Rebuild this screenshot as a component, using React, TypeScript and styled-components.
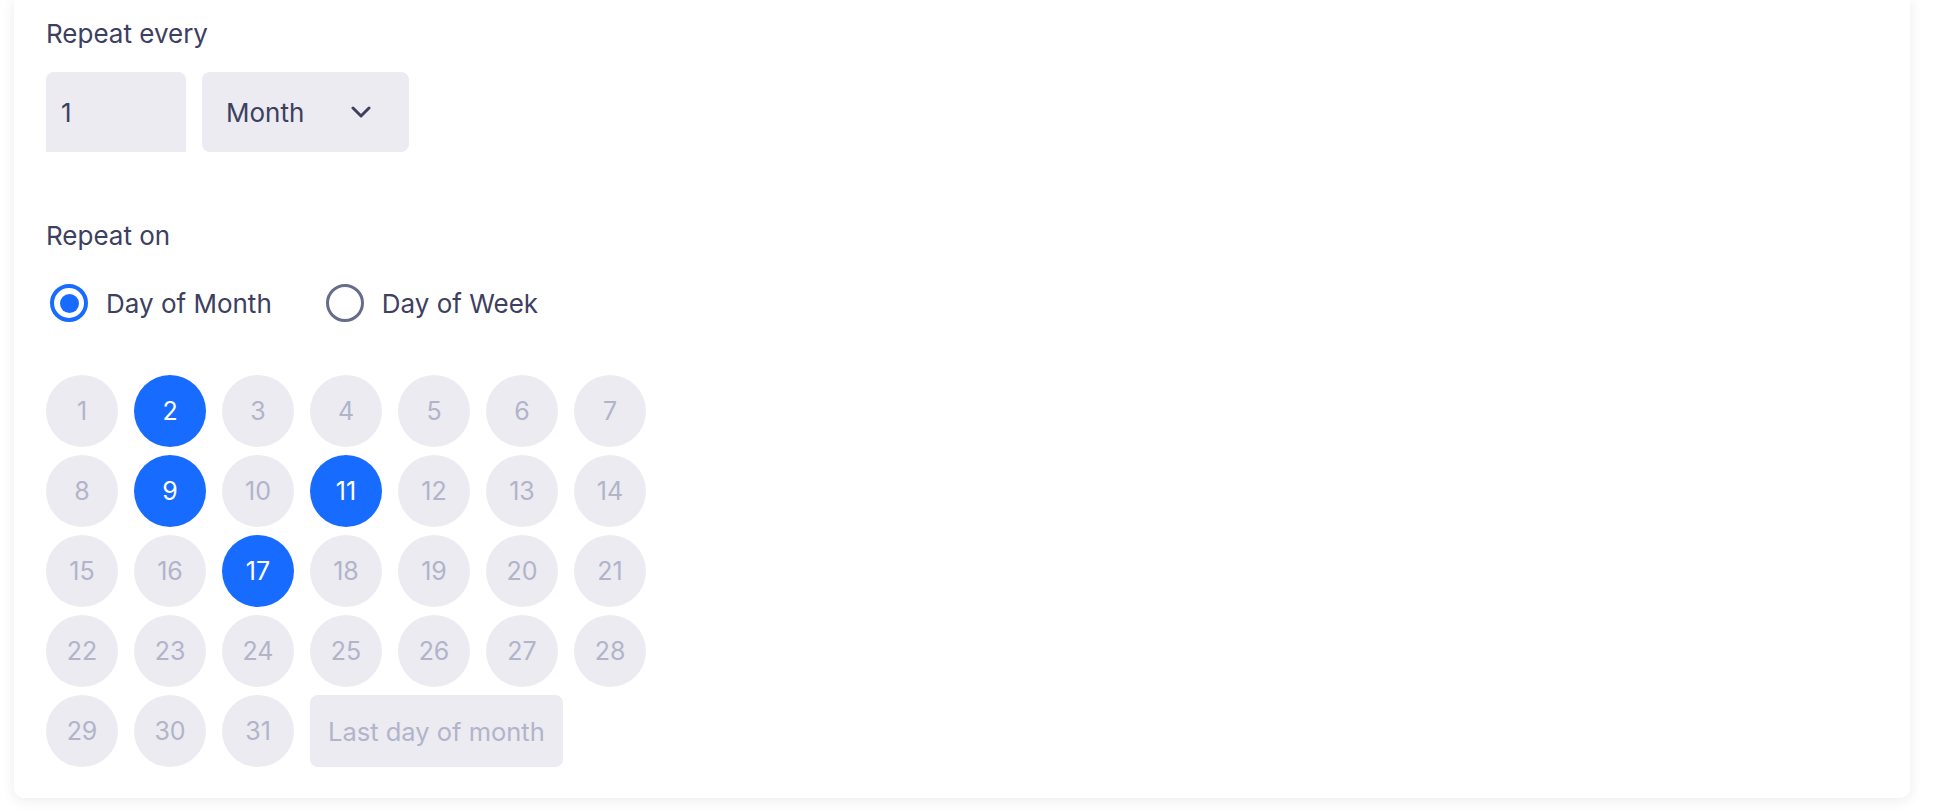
import React, { useState } from 'react';
import styled, { createGlobalStyle } from 'styled-components';

const GlobalStyle = createGlobalStyle`
    html, body {
        margin: 0;
        padding: 0;
        background: #ffffff;
    }
    body {
        font-family: Inter, "Liberation Sans", sans-serif;
        color: #3d405f;
    }
`

const Page = styled.div`
    padding: 0 30px 13px 14px;
`

const Card = styled.div`
    background: #fff;
    border-radius: 0 0 10px 10px;
    box-shadow: 0 2px 14px rgba(30, 34, 70, 0.09);
    padding: 18px 32px 31px 32px;
`

const Label = styled.div`
    font-size: 26px;
    line-height: 32px;
`

const InputRow = styled.div`
    display: flex;
    gap: 16px;
    margin-top: 22px;
`

const NumberBox = styled.div`
    width: 140px;
    height: 80px;
    box-sizing: border-box;
    background: #ebebf1;
    border-radius: 8px 8px 0 0;
    padding-left: 15px;
    display: flex;
    align-items: center;
    font-size: 26px;
`

const Select = styled.div`
    width: 207px;
    height: 80px;
    box-sizing: border-box;
    background: #ebebf1;
    border-radius: 8px;
    padding: 0 38px 0 24px;
    display: flex;
    align-items: center;
    justify-content: space-between;
    font-size: 26px;
`

const Section = styled.div`
    margin-top: 68px;
`

const RadioRow = styled.div`
    display: flex;
    align-items: center;
    gap: 54px;
    margin-top: 32px;
    padding-left: 4px;
`

const RadioOption = styled.label`
    display: flex;
    align-items: center;
    gap: 18px;
    font-size: 26px;
    cursor: pointer;
`

const RadioMark = styled.span<{ $checked: boolean }>`
    width: 38px;
    height: 38px;
    box-sizing: border-box;
    border-radius: 50%;
    border: ${p => p.$checked ? '4px solid #176cff' : '3px solid #686c8c'};
    display: flex;
    align-items: center;
    justify-content: center;
    &::after {
        content: '';
        width: 19px;
        height: 19px;
        border-radius: 50%;
        background: #176cff;
        display: ${p => p.$checked ? 'block' : 'none'};
    }
`

const DayGrid = styled.div`
    display: grid;
    grid-template-columns: repeat(7, 72px);
    column-gap: 16px;
    row-gap: 8px;
    margin-top: 53px;
`

const Day = styled.button<{ $active: boolean }>`
    width: 72px;
    height: 72px;
    border: none;
    border-radius: 50%;
    padding: 0;
    font-family: inherit;
    font-size: 25px;
    background: ${p => p.$active ? '#176cff' : '#ebebf1'};
    color: ${p => p.$active ? '#ffffff' : '#b2b4ca'};
    cursor: pointer;
`

const LastDay = styled.button`
    grid-column: 4 / span 4;
    justify-self: start;
    height: 72px;
    border: none;
    border-radius: 8px;
    padding: 0 18px;
    font-family: inherit;
    font-size: 25.5px;
    background: #ebebf1;
    color: #b2b4ca;
    cursor: pointer;
`

function Chevron() {
    return (
        <svg width="20" height="12" viewBox="0 0 20 12" fill="none">
            <path d="M2 2l8 8 8-8" stroke="#3d405f" strokeWidth="3" strokeLinecap="round" strokeLinejoin="round" />
        </svg>
    )
}

export default function App() {
    const [mode, setMode] = useState<'month' | 'week'>('month')
    const [selected, setSelected] = useState<number[]>([2, 9, 11, 17])
    const days = Array.from({ length: 31 }, (_, i) => i + 1)

    function toggle(d: number) {
        setSelected(s => s.includes(d) ? s.filter(x => x !== d) : [...s, d])
    }

    return (
        <>
            <GlobalStyle />
            <Page>
                <Card>
                    <Label>Repeat every</Label>
                    <InputRow>
                        <NumberBox>1</NumberBox>
                        <Select>
                            Month
                            <Chevron />
                        </Select>
                    </InputRow>
                    <Section>
                        <Label>Repeat on</Label>
                        <RadioRow>
                            <RadioOption onClick={() => setMode('month')}>
                                <RadioMark $checked={mode === 'month'} />
                                Day of Month
                            </RadioOption>
                            <RadioOption onClick={() => setMode('week')}>
                                <RadioMark $checked={mode === 'week'} />
                                Day of Week
                            </RadioOption>
                        </RadioRow>
                        <DayGrid>
                            {days.map(d =>
                                <Day key={d} $active={selected.includes(d)} onClick={() => toggle(d)}>{d}</Day>)}
                            <LastDay>Last day of month</LastDay>
                        </DayGrid>
                    </Section>
                </Card>
            </Page>
        </>
    )
}
